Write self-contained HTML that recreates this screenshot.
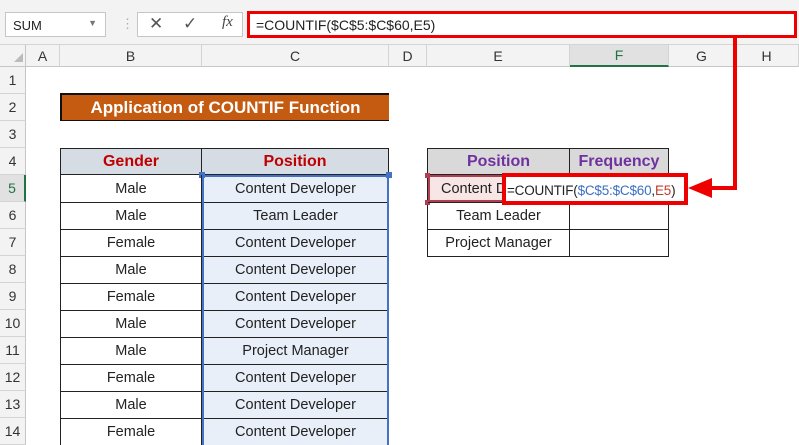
<!DOCTYPE html>
<html><head><meta charset="utf-8"><style>
*{margin:0;padding:0;box-sizing:border-box}
body{width:799px;height:445px;overflow:hidden;background:#fff;font-family:"Liberation Sans",sans-serif;position:relative}
.a{position:absolute}
.c{position:absolute;display:flex;align-items:center;justify-content:center;font-size:14.5px;color:#222}
.ch{position:absolute;top:45px;height:22px;border-right:1px solid #d4d4d4;display:flex;align-items:center;justify-content:center;font-size:14px;color:#333;background:#f3f3f3;border-bottom:1px solid #c6c6c6}
.rh{position:absolute;left:0;width:26px;height:27px;border-bottom:1px solid #d4d4d4;border-right:1px solid #c6c6c6;background:#f3f3f3;display:flex;align-items:center;justify-content:center;font-size:14px;color:#333}
</style></head><body>
<div class="a" style="left:0;top:0;width:799px;height:45px;background:#f3f3f3;border-bottom:1px solid #d4d4d4"></div>
<div class="a" style="left:5px;top:12px;width:101px;height:25px;background:#fff;border:1px solid #c6c6c6;font-size:13px;padding:5px 0 0 7px;color:#222">SUM<span style="position:absolute;right:8px;top:5px;font-size:9px;color:#777">▼</span></div>
<div class="a" style="left:121px;top:16px;color:#aaa;font-size:13px">⋮</div>
<div class="a" style="left:137px;top:12px;width:106px;height:25px;background:#fff;border:1px solid #c6c6c6"></div>
<div class="a" style="left:149px;top:14px;font-size:17px;color:#555">✕</div>
<div class="a" style="left:183px;top:14px;font-size:17px;color:#555">✓</div>
<div class="a" style="left:222px;top:14px;font-size:15px;color:#444;font-family:'Liberation Serif',serif;font-style:italic">fx</div>
<div class="a" style="left:247px;top:11px;width:550px;height:27px;background:#fff;border:3px solid #e00;font-size:14px;padding:3px 0 0 6px;color:#222">=COUNTIF($C$5:$C$60,E5)</div>
<div class="a" style="left:0;top:45px;width:26px;height:22px;background:#f3f3f3;border-right:1px solid #c6c6c6;border-bottom:1px solid #c6c6c6"></div>
<div class="a" style="left:14px;top:53px;width:0;height:0;border-left:9px solid transparent;border-bottom:9px solid #bbb"></div>
<div class="ch" style="left:26px;width:34px">A</div>
<div class="ch" style="left:60px;width:142px">B</div>
<div class="ch" style="left:202px;width:187px">C</div>
<div class="ch" style="left:389px;width:38px">D</div>
<div class="ch" style="left:427px;width:143px">E</div>
<div class="ch" style="left:570px;width:99px;background:#e1e1e1;border-bottom:2px solid #217346;color:#217346">F</div>
<div class="ch" style="left:669px;width:66px">G</div>
<div class="ch" style="left:735px;width:64px">H</div>
<div class="rh" style="top:67px">1</div><div class="rh" style="top:94px">2</div><div class="rh" style="top:121px">3</div><div class="rh" style="top:148px">4</div>
<div class="rh" style="top:175px;background:#e1e1e1;border-right:2px solid #217346;color:#217346">5</div>
<div class="rh" style="top:202px">6</div><div class="rh" style="top:229px">7</div><div class="rh" style="top:256px">8</div><div class="rh" style="top:283px">9</div><div class="rh" style="top:310px">10</div><div class="rh" style="top:337px">11</div><div class="rh" style="top:364px">12</div><div class="rh" style="top:391px">13</div><div class="rh" style="top:418px">14</div>
<div class="c" style="left:60px;top:93px;width:329px;height:28px;background:#c55a11;border-top:2px solid #111;border-left:2px solid #111;border-bottom:1px solid #111;color:#fff;font-weight:bold;font-size:17px">Application of COUNTIF Function</div>
<div class="a" style="left:60px;top:148px;width:329px;height:297px;border:1px solid #222;border-bottom:none"></div>
<div class="c" style="left:61px;top:149px;width:141px;height:26px;background:#d6dce4;color:#c00000;font-weight:bold;font-size:16px;border-right:1px solid #222;border-bottom:1px solid #222">Gender</div>
<div class="c" style="left:202px;top:149px;width:186px;height:26px;background:#d6dce4;color:#c00000;font-weight:bold;font-size:16px;border-bottom:1px solid #222">Position</div>
<div class="a" style="left:202px;top:175px;width:187px;height:270px;background:#e8eff8;border:2px solid #4472c4;border-bottom:none"></div>
<div class="a" style="left:199px;top:172px;width:6px;height:6px;background:#4472c4"></div>
<div class="a" style="left:386px;top:172px;width:6px;height:6px;background:#4472c4"></div>
<div id="rows"></div>
<div class="a" style="left:427px;top:148px;width:242px;height:109px;border:1px solid #222"></div>
<div class="c" style="left:428px;top:149px;width:142px;height:26px;background:#d9d9d9;color:#7030a0;font-weight:bold;font-size:16px;border-right:1px solid #222;border-bottom:1px solid #222">Position</div>
<div class="c" style="left:570px;top:149px;width:98px;height:26px;background:#d9d9d9;color:#7030a0;font-weight:bold;font-size:16px;border-bottom:1px solid #222">Frequency</div>
<div class="c" style="left:428px;top:175px;width:142px;height:27px;background:#f8e6e6;border:2px solid #b04050;justify-content:flex-start;padding-left:11px">Content D</div>
<div class="a" style="left:425px;top:173px;width:5px;height:5px;background:#b04050"></div>
<div class="a" style="left:425px;top:200px;width:5px;height:5px;background:#b04050"></div>
<div class="c" style="left:428px;top:202px;width:142px;height:27px;border-right:1px solid #222;border-top:1px solid #222">Team Leader</div>
<div class="c" style="left:570px;top:202px;width:98px;height:27px;border-top:1px solid #222"></div>
<div class="c" style="left:428px;top:229px;width:142px;height:27px;border-right:1px solid #222;border-top:1px solid #222">Project Manager</div>
<div class="c" style="left:570px;top:229px;width:98px;height:27px;border-top:1px solid #222"></div>
<div class="a" style="left:570px;top:175px;width:1px;height:27px;background:#222"></div>
<div class="a" style="left:502px;top:173px;width:186px;height:32px;background:#fff;border:4px solid #e00;font-size:13.5px;letter-spacing:-0.2px;padding:6px 0 0 1px;color:#222;white-space:nowrap">=COUNTIF(<span style="color:#3a6fc4">$C$5:$C$60</span>,<span style="color:#c0392b">E5</span>)</div>
<svg class="a" style="left:0;top:0" width="799" height="445"><path d="M735 38 V188 H706" fill="none" stroke="#e00" stroke-width="4"/><polygon points="688,188 712,178 712,198" fill="#e00"/></svg>
<script>
var d=[["Male","Content Developer"],["Male","Team Leader"],["Female","Content Developer"],["Male","Content Developer"],["Female","Content Developer"],["Male","Content Developer"],["Male","Project Manager"],["Female","Content Developer"],["Male","Content Developer"],["Female","Content Developer"]];
var h="";d.forEach(function(r,i){var t=175+i*27;h+='<div class="c" style="left:61px;top:'+t+'px;width:141px;height:27px;border-right:1px solid #222;'+(i?'border-top:1px solid #222':'')+'">'+r[0]+'</div><div class="c" style="left:204px;top:'+t+'px;width:183px;height:27px;'+(i?'border-top:1px solid #222':'')+'">'+r[1]+'</div>';});
document.getElementById("rows").outerHTML=h;
</script>
</body></html>
